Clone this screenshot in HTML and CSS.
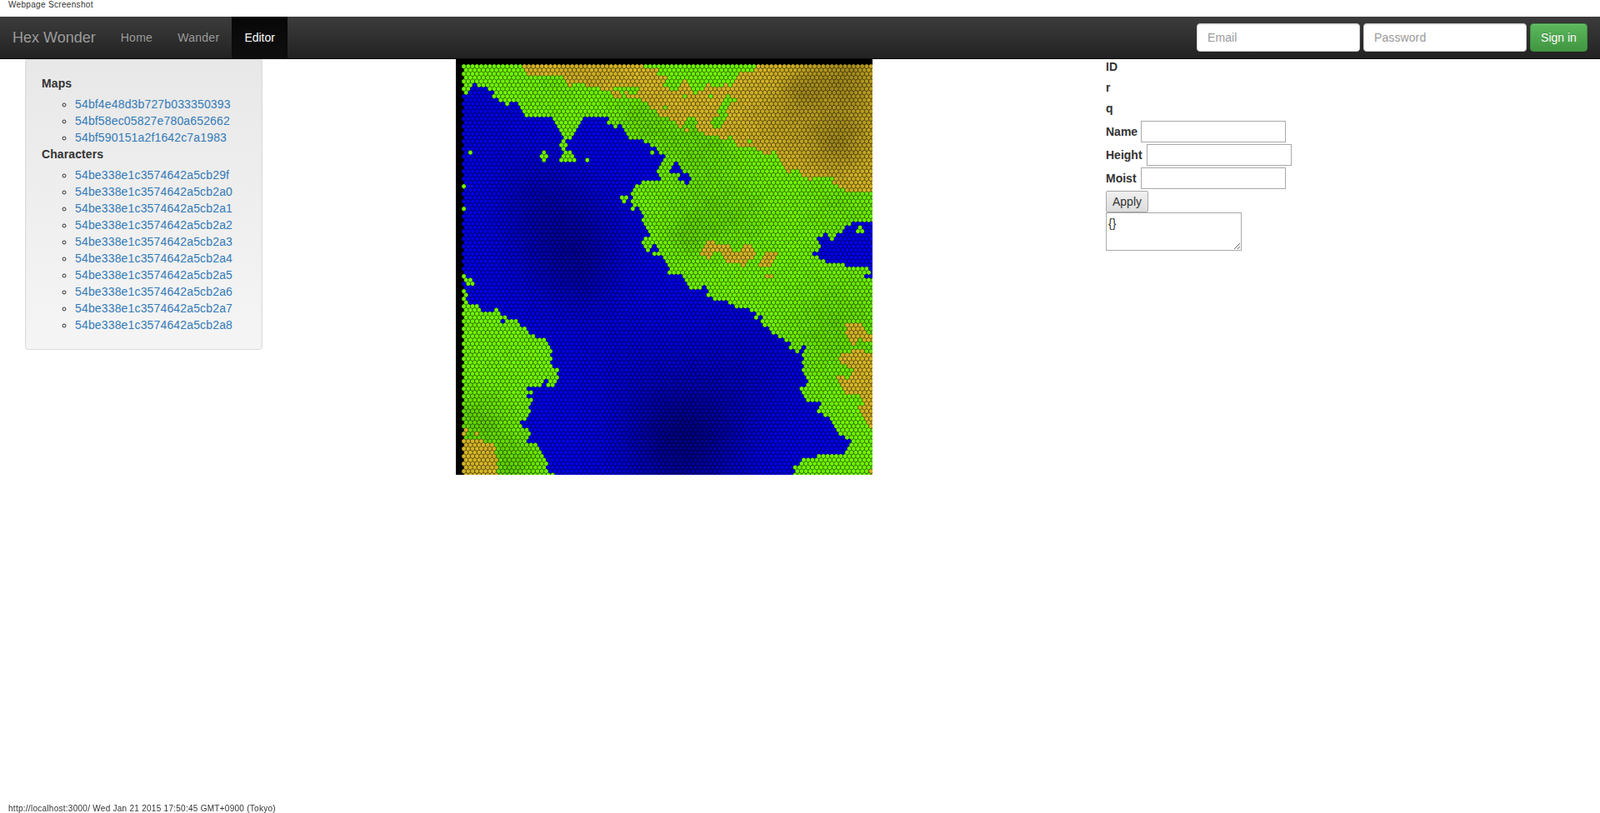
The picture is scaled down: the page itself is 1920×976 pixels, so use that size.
FILE: index.html
```html
<!DOCTYPE html>
<html lang="en">
<head>
<meta charset="utf-8">
<title>Hex Wonder</title>
<link rel="stylesheet" href="styles.css">
</head>
<body>
<header class="print-head">Webpage Screenshot</header>
<nav class="navbar">
  <a class="brand" href="#">Hex Wonder</a>
  <ul class="nav-links">
    <li><a href="#">Home</a></li>
    <li><a href="#">Wander</a></li>
    <li class="active"><a href="#">Editor</a></li>
  </ul>
  <form class="signin">
    <input class="form-control" type="text" placeholder="Email">
    <input class="form-control" type="password" placeholder="Password">
    <button class="btn-success" type="button">Sign in</button>
  </form>
</nav>
<main class="content">
  <aside class="well">
    <div class="well-label">Maps</div>
    <ul class="id-list">
      <li><a href="#">54bf4e48d3b727b033350393</a></li>
      <li><a href="#">54bf58ec05827e780a652662</a></li>
      <li><a href="#">54bf590151a2f1642c7a1983</a></li>
    </ul>
    <div class="well-label">Characters</div>
    <ul class="id-list">
      <li><a href="#">54be338e1c3574642a5cb29f</a></li>
      <li><a href="#">54be338e1c3574642a5cb2a0</a></li>
      <li><a href="#">54be338e1c3574642a5cb2a1</a></li>
      <li><a href="#">54be338e1c3574642a5cb2a2</a></li>
      <li><a href="#">54be338e1c3574642a5cb2a3</a></li>
      <li><a href="#">54be338e1c3574642a5cb2a4</a></li>
      <li><a href="#">54be338e1c3574642a5cb2a5</a></li>
      <li><a href="#">54be338e1c3574642a5cb2a6</a></li>
      <li><a href="#">54be338e1c3574642a5cb2a7</a></li>
      <li><a href="#">54be338e1c3574642a5cb2a8</a></li>
    </ul>
  </aside>
  <canvas id="map" class="map" width="500" height="500"></canvas>
  <form class="editor">
    <div class="info">ID</div>
    <div class="info">r</div>
    <div class="info">q</div>
    <div class="field"><label class="label-short">Name</label><input class="plain" type="text"></div>
    <div class="field"><label class="label-long">Height</label><input class="plain" type="text"></div>
    <div class="field"><label class="label-short">Moist</label><input class="plain" type="text"></div>
    <button class="apply" type="button">Apply</button>
    <textarea class="json">{}</textarea>
  </form>
</main>
<footer class="print-foot">http://localhost:3000/ Wed Jan 21 2015 17:50:45 GMT+0900 (Tokyo)</footer>
<script src="map.js"></script>
</body>
</html>
```
FILE: styles.css
```css
* { box-sizing: border-box; }
html, body { height: 100%; }
body {
  margin: 0;
  height: 976px;
  display: flex;
  flex-direction: column;
  overflow: hidden;
  font-family: "Liberation Sans", Arial, sans-serif;
  font-size: 14px;
  line-height: 20px;
  color: #333;
  background: #fff;
}
a { color: #337ab7; text-decoration: none; }

.print-head {
  height: 20px;
  padding: 0 10px 9px;
  font-size: 10px;
  line-height: 11px;
  letter-spacing: 0.32px;
}
.print-foot {
  margin-top: auto;
  height: 10px;
  padding: 0 10px;
  font-size: 10px;
  line-height: 10px;
  letter-spacing: 0.27px;
}

.navbar {
  position: relative;
  z-index: 1;
  height: 51px;
  margin-bottom: -1px;
  flex: none;
  display: flex;
  background: linear-gradient(to bottom, #3c3c3c 0, #222 100%);
  border-bottom: 1px solid #080808;
}
.brand {
  padding: 15px;
  font-size: 18px;
  line-height: 20px;
  color: #9d9d9d;
  text-shadow: 0 -1px 0 rgba(0, 0, 0, .25);
}
.nav-links { display: flex; margin: 0; padding: 0; list-style: none; }
.nav-links a {
  display: block;
  padding: 15px;
  letter-spacing: 0.28px;
  color: #9d9d9d;
  text-shadow: 0 -1px 0 rgba(0, 0, 0, .25);
}
.nav-links .active a {
  letter-spacing: 0;
  color: #fff;
  background: linear-gradient(to bottom, #080808 0, #0f0f0f 100%);
  box-shadow: inset 0 3px 9px rgba(0, 0, 0, .25);
}
.signin {
  margin-left: auto;
  padding: 8px 15px 0 0;
  display: flex;
  gap: 4px;
}
.form-control {
  width: 196px;
  height: 34px;
  padding: 6px 12px;
  font: inherit;
  letter-spacing: 0.1px;
  color: #555;
  background: #fff;
  border: 1px solid #ccc;
  border-radius: 4px;
  box-shadow: inset 0 1px 1px rgba(0, 0, 0, .075);
}
.form-control::placeholder { color: #999; opacity: 1; }
.btn-success {
  width: 69px;
  height: 34px;
  padding: 6px 0;
  font: inherit;
  color: #fff;
  text-shadow: 0 -1px 0 rgba(0, 0, 0, .2);
  background: linear-gradient(to bottom, #5cb85c 0, #419641 100%);
  border: 1px solid #3e8f3e;
  border-radius: 4px;
  box-shadow: inset 0 1px 0 rgba(255, 255, 255, .15), 0 1px 1px rgba(0, 0, 0, .075);
}

.content { display: flex; align-items: flex-start; padding-left: 30px; }
.well {
  width: 285px;
  flex: none;
  padding: 19px;
  background: linear-gradient(to bottom, #e8e8e8 0, #f5f5f5 100%);
  border: 1px solid #dcdcdc;
  border-radius: 4px;
  box-shadow: inset 0 1px 3px rgba(0, 0, 0, .05), 0 1px 0 rgba(255, 255, 255, .1);
}
.well-label { font-weight: 700; margin-bottom: 5px; letter-spacing: 0.1px; }
.id-list { margin: 0; padding-left: 40px; list-style: circle; letter-spacing: 0.155px; }
.map { display: block; flex: none; margin-left: 232px; }
.editor { margin-left: 280px; flex: none; width: 240px; }
.info { font-weight: 700; height: 20px; margin-bottom: 5px; }
.field { display: flex; align-items: center; gap: 4px; height: 26px; margin-bottom: 2px; font-weight: 700; }
.label-short { width: 38px; }
.label-long { width: 45px; }
.plain {
  width: 174px;
  height: 26px;
  padding: 1px 2px;
  font: 14px "Liberation Sans", Arial, sans-serif;
  color: #333;
  background: #fff;
  border: 1px solid #a9a9a9;
}
.apply {
  display: block;
  width: 51px;
  height: 26px;
  padding: 0;
  font: 14px "Liberation Sans", Arial, sans-serif;
  color: #333;
  background: linear-gradient(to bottom, #f0f0f0 0, #ddd 100%);
  border: 1px solid #a9a9a9;
  border-radius: 2px;
}
.json {
  display: block;
  width: 163px;
  height: 46px;
  padding: 2px;
  font: 14px/20px "Liberation Sans", Arial, sans-serif;
  color: #333;
  background: #fff;
  border: 1px solid #a9a9a9;
  border-radius: 0;
}
```
FILE: map.js
```js
(function () {
  var canvas = document.getElementById('map');
  var ctx = canvas.getContext('2d');
  ctx.fillStyle = '#000';
  ctx.fillRect(0, 0, canvas.width, canvas.height);

  // All terrain outlines are in units of 1/3 px, origin at page (540, 60).
  var north = [[43,150],[60,158],[75,135],[90,120],[105,130],[130,130],[150,145],[160,170],[180,185],[210,198],[235,188],[250,200],[272,240],[330,245],[370,240],[390,280],[405,320],[385,345],[400,365],[420,345],[415,320],[440,320],[478,243],[565,240],[570,265],[600,280],[620,270],[650,318],[720,335],[750,365],[778,380],[745,440],[760,470],[700,475],[665,490],[652,520],[660,575],[680,570],[690,600],[720,660],[690,690],[710,725],[730,700],[750,705],[760,735],[785,790],[780,800],[840,810],[870,860],[920,855],[930,890],[960,900],[1000,905],[1030,925],[1080,935],[1125,960],[1125,990],[1160,1020],[1220,1050],[1225,1080],[1255,1090],[1265,1070],[1285,1070],[1265,1120],[1275,1150],[1265,1170],[1290,1190],[1265,1220],[1290,1265],[1335,1260],[1325,1300],[1375,1335],[1405,1385],[1445,1410],[1425,1450],[1270,1470],[1240,1505],[1240,1540],[1530,1540],[1530,40],[30,40],[30,150]];
  var southwest = [[30,915],[100,920],[120,940],[170,935],[190,960],[240,970],[290,1025],[340,1045],[365,1085],[360,1130],[390,1150],[390,1180],[370,1210],[350,1210],[345,1180],[320,1220],[290,1220],[300,1260],[275,1330],[255,1340],[285,1380],[280,1415],[310,1420],[340,1470],[350,1490],[350,1510],[390,1540],[30,1540]];
  var pockets = [
    [[1530,620],[1450,620],[1420,645],[1395,660],[1380,690],[1350,660],[1325,680],[1335,715],[1305,735],[1345,755],[1375,770],[1420,770],[1430,782],[1500,785],[1510,800],[1490,820],[1530,825]],
    [[815,398],[790,445],[830,445],[825,465],[855,487],[872,465],[855,445],[838,442]]
  ];
  var tan = [
    [[255,40],[1530,40],[1530,510],[1440,510],[1380,480],[1385,460],[1290,465],[1255,440],[1210,440],[1195,410],[1185,385],[1110,365],[1090,350],[1035,345],[1030,325],[985,320],[920,305],[900,295],[885,275],[890,250],[860,245],[845,265],[825,285],[800,250],[760,240],[720,205],[680,165],[660,175],[620,165],[600,170],[580,155],[550,145],[470,120],[440,130],[410,120],[410,95],[350,90],[310,95],[265,85]],
    [[925,690],[955,690],[960,705],[1010,705],[1020,730],[1045,725],[1055,700],[1085,700],[1105,735],[1085,755],[1060,775],[1050,775],[1040,760],[1000,770],[985,745],[975,730],[945,730],[935,750],[920,745],[900,735]],
    [[1130,730],[1180,730],[1165,755],[1150,780],[1115,780]],
    [[1130,808],[1168,808],[1168,822],[1130,822]],
    [[1425,985],[1485,985],[1505,1025],[1530,1025],[1530,1050],[1490,1050],[1475,1030],[1460,1050],[1450,1065],[1430,1030]],
    [[1530,1090],[1450,1080],[1430,1095],[1400,1100],[1410,1130],[1425,1125],[1450,1155],[1440,1185],[1395,1175],[1420,1220],[1440,1250],[1470,1240],[1490,1270],[1470,1290],[1495,1340],[1530,1370]],
    [[30,1405],[105,1405],[165,1420],[172,1540],[30,1540]],
    [[1510,1510],[1530,1510],[1530,1540],[1510,1540]]
  ];
  var greenPatches = [
    [[700,40],[1105,40],[1085,80],[1040,85],[1030,115],[1015,138],[1005,120],[970,133],[920,120],[915,140],[880,160],[865,125],[840,110],[815,148],[770,135],[790,100],[770,85],[750,95],[745,65],[700,67]],
    [[590,133],[682,133],[665,172],[645,150],[625,155],[590,150]],
    [[1000,160],[1032,185],[1005,190],[995,240],[975,285],[942,272],[945,250],[965,240],[965,225],[985,190]],
    [[1240,425],[1255,425],[1255,445],[1215,445]]
  ];
  var landDots = [[50,492],[50,573],[73,370],[338,370],[330,383],[345,383],[338,397],[495,397],[728,370],[660,573],[620,533],[635,533],[628,547],[418,370],[432,370],[410,383],[425,383],[440,383],[402,397],[417,397],[432,397],[448,397],[60,155],[158,168],[1475,640],[1468,654],[1483,654],[50,815],[65,830],[75,828],[65,842],[82,842],[50,870],[57,883],[50,897],[57,910],[1100,965],[700,680],[715,720],[737,735],[752,735]];
  var waterDots = [[190,977],[285,1220],[285,1245]];
  var tanDots = [[57,1370],[50,1383],[97,1383],[855,290],[600,168]];
  var greenDots = [[445,127],[845,168],[938,168],[775,208],[1010,318],[1080,330],[1165,370],[1010,128]];

  // Brightness dips: [x, y, sigma, amount] in the same units.
  var blueDark = [[420,690,140,0.3],[300,500,110,0.12],[840,1410,150,0.42],[1060,1150,160,0.12],[650,1120,160,0.08],[120,250,100,0.05],[480,830,90,0.1]];
  var greenDark = [[900,620,90,0.1],[1050,590,80,0.07],[700,250,80,0.1],[900,340,100,0.11],[380,110,70,0.05],[1400,560,90,0.07],[1400,1000,120,0.11],[100,1340,80,0.15],[220,1500,70,0.14],[850,680,40,0.08]];
  var tanDark = [[1420,90,80,0.2],[1270,140,50,0.16],[1400,340,70,0.18],[1200,260,90,0.09],[1420,230,110,0.1],[500,70,70,0.05]];

  function inside(poly, x, y) {
    var hit = false;
    for (var i = 0, j = poly.length - 1; i < poly.length; j = i++) {
      var a = poly[i], b = poly[j];
      if ((a[1] > y) !== (b[1] > y) && x < (b[0] - a[0]) * (y - a[1]) / (b[1] - a[1]) + a[0]) hit = !hit;
    }
    return hit;
  }
  function anyInside(list, x, y) {
    return list.some(function (p) { return inside(p, x, y); });
  }
  function nearDot(list, x, y) {
    return list.some(function (d) { return Math.abs(d[0] - x) < 8 && Math.abs(d[1] - y) < 7; });
  }
  function dip(list, x, y) {
    var v = 1;
    list.forEach(function (g) {
      var dx = x - g[0], dy = y - g[1];
      v -= g[3] * Math.exp(-(dx * dx + dy * dy) / (2 * g[2] * g[2]));
    });
    return v;
  }
  function kind(x, y) {
    var land = inside(north, x, y) || inside(southwest, x, y) || nearDot(landDots, x, y);
    if (anyInside(pockets, x, y) && !nearDot(landDots, x, y)) land = false;
    if (nearDot(waterDots, x, y)) land = false;
    if (!land) return 'water';
    if (nearDot(greenDots, x, y)) return 'green';
    if (nearDot(tanDots, x, y)) return 'tan';
    if (anyInside(tan, x, y) && !anyInside(greenPatches, x, y)) return 'tan';
    return 'green';
  }
  function mottle(x, y) {
    return Math.sin(x / 23 + 1.3) * Math.sin(y / 17 + 0.4) * 0.5 + Math.sin(x / 9.7 + y / 14) * Math.sin(y / 8.3 - x / 19) * 0.5;
  }

  var seed = 12345;
  function rand() {
    seed = (seed * 1664525 + 1013904223) % 4294967296;
    return seed / 4294967296;
  }

  var R = 2.95, W = Math.sqrt(3) * 3, H = 4.5;
  var originX = 556.7 - 547, originY = 79.7 - 70;
  ctx.lineWidth = 0.55;
  ctx.strokeStyle = 'rgba(0,0,0,0.5)';

  for (var r = 0; r < 112; r++) {
    for (var q = 0; q < 98; q++) {
      var cx = originX + q * W + (r % 2 ? W / 2 : 0);
      var cy = originY + r * H;
      var zx = (cx + 547 - 540) * 3, zy = (cy + 70 - 60) * 3;
      var k = kind(zx, zy);
      var jitter = (rand() - 0.5) * 0.03 + mottle(zx, zy) * 0.035;
      var color;
      if (k === 'water') {
        var b = Math.max(0.4, dip(blueDark, zx, zy)) + jitter * 0.5;
        color = 'rgb(0,0,' + Math.min(255, Math.round(235 * b)) + ')';
      } else if (k === 'green') {
        var g = dip(greenDark, zx, zy) + jitter;
        color = 'rgb(' + Math.round(112 * g) + ',' + Math.min(255, Math.round(245 * g)) + ',0)';
      } else {
        var t = dip(tanDark, zx, zy) + jitter;
        color = 'rgb(' + Math.round(212 * t) + ',' + Math.round(180 * t) + ',' + Math.round(38 * t) + ')';
      }
      ctx.beginPath();
      for (var i = 0; i < 6; i++) {
        var a = Math.PI / 3 * i + Math.PI / 6;
        var px = cx + R * Math.cos(a), py = cy + R * Math.sin(a);
        if (i === 0) ctx.moveTo(px, py); else ctx.lineTo(px, py);
      }
      ctx.closePath();
      ctx.fillStyle = color;
      ctx.fill();
      ctx.stroke();
    }
  }
})();
```
